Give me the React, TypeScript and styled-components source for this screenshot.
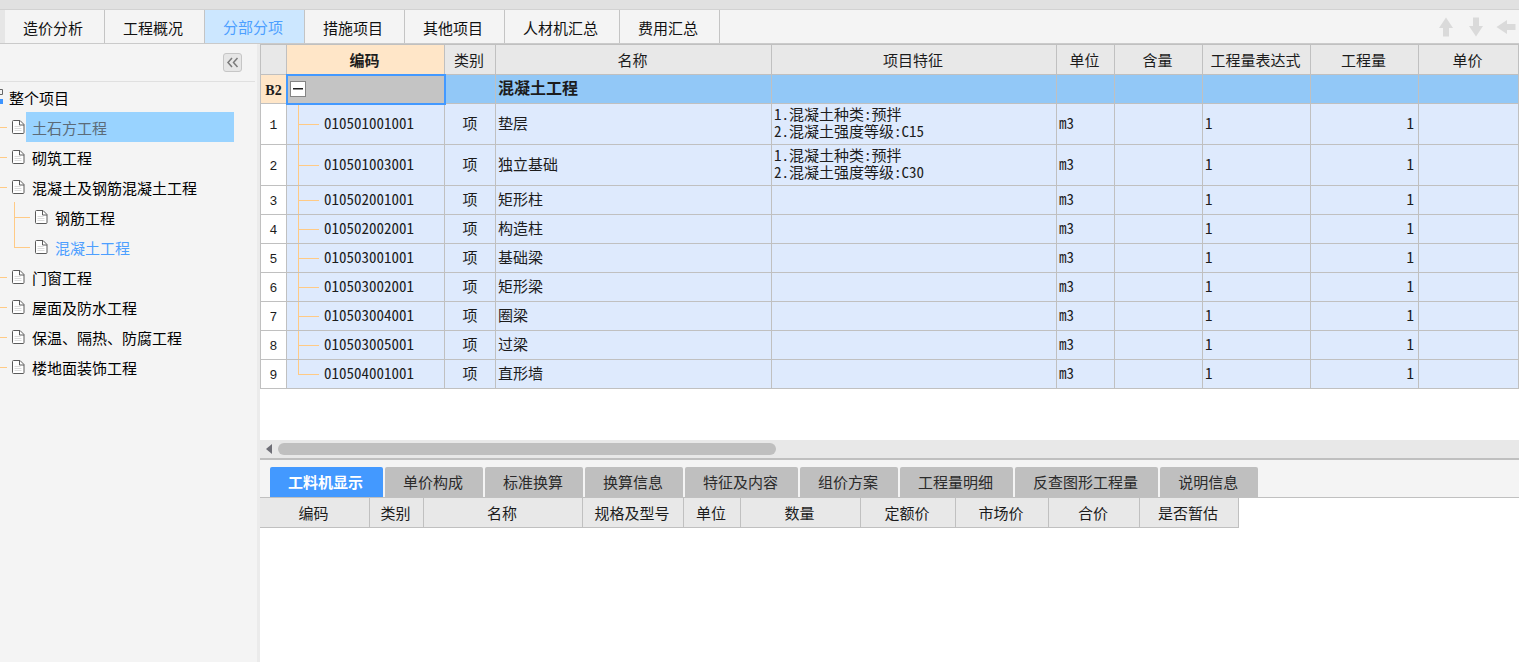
import React from "react";
import styled, { createGlobalStyle, css } from "styled-components";

const GlobalStyle = createGlobalStyle`
  *, *::before, *::after { box-sizing: border-box; }
  body {
    margin: 0;
    font-family: "Noto Sans CJK SC", "Liberation Sans", sans-serif;
    font-size: 15px;
    line-height: 20px;
    color: #1c1c1c;
    background: #fff;
  }
  button { font: inherit; color: inherit; border: 0; padding: 0; background: none; }
`;

const GRID = "#c0c0c0";
const BRANCH = "#ffca85";

const Shell = styled.div`
  min-height: 100vh;
  display: flex;
  flex-direction: column;
`;

const TitleStrip = styled.div`
  height: 10px;
  background: #e1e1e1;
  border-bottom: 1px solid #d2d2d2;
`;

const TopBar = styled.header`
  display: flex;
  justify-content: space-between;
  height: 34px;
  background: #f4f4f4;
  border-bottom: 1px solid #cacaca;
`;

const TopTabs = styled.nav`
  display: flex;
  border-left: 5px solid #e6e6e6;
`;

const TopTab = styled.button<{ $active?: boolean }>`
  padding: 2px 21px 0 18px;
  border-right: 1px solid #c4c4c4;
  color: #111;
  white-space: nowrap;
  ${(p) => p.$active && css`
    padding-top: 0;
    color: #4d9fff;
    background: #cce7ff;
  `}
`;

const MoveTools = styled.div`
  display: flex;
  align-items: center;
  gap: 10px;
  padding: 0 3px 0 0;
`;

const MoveButton = styled.button`
  display: flex;
  width: 20px;
  height: 20px;
`;

const Body = styled.div`
  flex: 1;
  display: flex;
`;

const Sidebar = styled.aside`
  flex: 0 0 260px;
  background: #f4f4f4;
  border-right: 3px solid #ebebeb;
  overflow: hidden;
`;

const SidebarHead = styled.div`
  display: flex;
  justify-content: flex-end;
  align-items: center;
  height: 38px;
  margin-right: 2px;
  padding-right: 13px;
  border-bottom: 1px solid #e0e0e0;
`;

const CollapseButton = styled.button`
  display: grid;
  place-items: center;
  width: 19px;
  height: 19px;
  border: 1px solid #c6c6c6;
  border-radius: 3px;
  background: #e6e6e6;
`;

const TreeList = styled.ul`
  list-style: none;
  margin: 0;
  padding: 0;
`;

const TreeItem = styled.li<{ $nested?: boolean }>`
  display: flex;
  align-items: center;
  height: 30px;
  padding-left: ${(p) => (p.$nested ? 14 : 0)}px;
  padding-right: 23px;
`;

const Branch = styled.span<{ $nested?: boolean; $last?: boolean }>`
  flex: none;
  align-self: stretch;
  width: ${(p) => (p.$nested ? 20 : 11)}px;
  background:
    linear-gradient(${BRANCH}, ${BRANCH}) 0 15px / ${(p) => (p.$nested ? 16 : 7)}px 1px no-repeat
    ${(p) => p.$nested && css`, linear-gradient(${BRANCH}, ${BRANCH}) 0 0 / 1px ${p.$last ? "16px" : "100%"} no-repeat`};
`;

const TreeLabel = styled.button<{ $state?: "selected" | "current" }>`
  flex: 1;
  height: 30px;
  margin-left: 1px;
  padding: 2px 0 0 6px;
  text-align: left;
  white-space: nowrap;
  color: #000;
  ${(p) => p.$state === "selected" && css`
    color: #5c6b78;
    background: #99d3ff;
  `}
  ${(p) => p.$state === "current" && css`color: #4d9fff;`}
`;

const RootLabel = styled(TreeLabel)`
  margin-left: 0;
`;

const Main = styled.main`
  flex: 1;
  min-width: 0;
  display: flex;
  flex-direction: column;
`;

const UpperPane = styled.section`
  padding-bottom: 51px;
  overflow: hidden;
`;

const Table = styled.table`
  border-collapse: separate;
  border-spacing: 0;
  table-layout: fixed;
`;

const BillTable = styled(Table)`
  width: 100%;
  min-width: 1259px;
  border-left: 1px solid ${GRID};
`;

const Th = styled.th<{ $active?: boolean }>`
  height: 30px;
  padding: 0 2px 0 0;
  font-weight: ${(p) => (p.$active ? 700 : 400)};
  white-space: nowrap;
  background: ${(p) => (p.$active ? "#ffe6c8" : "#e8e8e8")};
  border-right: 1px solid ${GRID};
  border-bottom: 1px solid ${GRID};
`;

const BillTh = styled(Th)`
  height: 31px;
  border-top: 1px solid ${GRID};
`;

const Row = styled.tr<{ $group?: boolean; $tall?: boolean }>`
  height: ${(p) => (p.$tall ? 41 : 29)}px;
  background: ${(p) => (p.$group ? "#92c8f7" : "#deeafd")};
  font-weight: ${(p) => (p.$group ? 700 : 400)};
  font-size: ${(p) => (p.$group ? 16 : 15)}px;
`;

const Td = styled.td<{ $align?: "center" | "right" }>`
  padding: 0 2px 4px;
  text-align: ${(p) => p.$align ?? "left"};
  line-height: 17px;
  white-space: pre-line;
  font-feature-settings: "hwid";
  border-right: 1px solid ${GRID};
  border-bottom: 1px solid ${GRID};
`;

const AmountTd = styled(Td)`
  padding-right: 4px;
`;

const RowHead = styled.th<{ $active?: boolean }>`
  padding: 3px 0 0;
  line-height: 17px;
  font-family: ${(p) => (p.$active ? '"Liberation Serif", serif' : '"Liberation Mono", monospace')};
  font-size: ${(p) => (p.$active ? 14 : 13)}px;
  font-weight: ${(p) => (p.$active ? 700 : 400)};
  background: ${(p) => (p.$active ? "#ffe6c8" : "#fff")};
  border-right: 1px solid ${GRID};
  border-bottom: 1px solid ${GRID};
`;

const FocusTd = styled(Td)`
  padding: 0;
  background: #c4c4c4;
  outline: 2px solid #4399ff;
  outline-offset: -1px;
`;

const Toggle = styled.button`
  display: grid;
  place-items: center;
  width: 16px;
  height: 16px;
  margin-left: 3px;
  border: 1px solid #858585;
  background: #fff;
`;

const CodeTd = styled(Td)<{ $last?: boolean }>`
  padding-left: 37px;
  background:
    linear-gradient(${BRANCH}, ${BRANCH}) 11px 50% / 21px 1px no-repeat,
    linear-gradient(${BRANCH}, ${BRANCH}) 11px 0 / 1px ${(p) => (p.$last ? "50%" : "100%")} no-repeat;
`;

const ScrollTrack = styled.div`
  display: flex;
  align-items: center;
  gap: 5px;
  height: 18px;
  padding: 0 10px 0 5px;
  background: #e8e8e8;
`;

const ScrollArrow = styled.button`
  display: flex;
  width: 8px;
  height: 12px;
`;

const ScrollThumb = styled.div`
  width: 40%;
  height: 12px;
  border-radius: 6px;
  background: #bfbfbf;
`;

const LowerPane = styled.section`
  flex: 1;
  border-top: 2px solid #bfbfbf;
  overflow: hidden;
`;

const DetailTabs = styled.nav`
  display: flex;
  align-items: flex-end;
  gap: 2px;
  height: 38px;
  padding-left: 10px;
  background: #f4f4f4;
  border-bottom: 1px solid ${GRID};
`;

const DetailTab = styled.button<{ $active?: boolean }>`
  height: 30px;
  padding: 0 20px 0 18px;
  border-radius: 2px 2px 0 0;
  white-space: nowrap;
  color: ${(p) => (p.$active ? "#fff" : "#2b2b2b")};
  font-weight: ${(p) => (p.$active ? 700 : 400)};
  background: ${(p) => (p.$active ? "#4399ff" : "#bfbfbf")};
`;

const DocIcon = () => (
  <svg width="14" height="16" viewBox="0 0 14 16" fill="none">
    <path d="M2.500 1.500h6.500l4 4v8q0 1-1 1h-9.500q-1 0-1-1v-11q0-1 1-1z" fill="#fff" stroke="#5a5a5a" />
    <path d="M8.500 1.500v4.500h4.500" stroke="#5a5a5a" />
    <path d="M3.500 7.500h6M3.500 9.500h7M3.500 11.500h7" stroke="#dcdcdc" />
  </svg>
);

const ProjectIcon = () => (
  <svg width="3" height="18" viewBox="0 0 3 18" fill="none">
    <path d="M0 1.500h2.500v5H0" stroke="#666" />
    <path d="M0 11h3v5H0z" fill="#3d94ff" />
  </svg>
);

const Arrow = ({ turn }: { turn: number }) => (
  <svg width="20" height="20" viewBox="0 0 20 20">
    <path d="M10 0.500L17 11h-4v8.500H7V11H3z" fill="#dadada" transform={`rotate(${turn} 10 10)`} />
  </svg>
);

const topTabs = ["造价分析", "工程概况", "分部分项", "措施项目", "其他项目", "人材机汇总", "费用汇总"];

type TreeNode = { label: string; nested?: boolean; last?: boolean; state?: "selected" | "current" };
const nodes: TreeNode[] = [
  { label: "土石方工程", state: "selected" },
  { label: "砌筑工程" },
  { label: "混凝土及钢筋混凝土工程" },
  { label: "钢筋工程", nested: true },
  { label: "混凝土工程", nested: true, last: true, state: "current" },
  { label: "门窗工程" },
  { label: "屋面及防水工程" },
  { label: "保温、隔热、防腐工程" },
  { label: "楼地面装饰工程" },
];

type Column = { label: string; width?: number; active?: boolean };
const billColumns: Column[] = [
  { label: "", width: 26 },
  { label: "编码", width: 158, active: true },
  { label: "类别", width: 51 },
  { label: "名称", width: 276 },
  { label: "项目特征", width: 285 },
  { label: "单位", width: 58 },
  { label: "含量", width: 88 },
  { label: "工程量表达式", width: 108 },
  { label: "工程量", width: 108 },
  { label: "单价" },
];

const items = [
  { code: "010501001001", name: "垫层", feature: "1.混凝土种类:预拌\n2.混凝土强度等级:C15" },
  { code: "010501003001", name: "独立基础", feature: "1.混凝土种类:预拌\n2.混凝土强度等级:C30" },
  { code: "010502001001", name: "矩形柱" },
  { code: "010502002001", name: "构造柱" },
  { code: "010503001001", name: "基础梁" },
  { code: "010503002001", name: "矩形梁" },
  { code: "010503004001", name: "圈梁" },
  { code: "010503005001", name: "过梁" },
  { code: "010504001001", name: "直形墙" },
];

const detailTabs = ["工料机显示", "单价构成", "标准换算", "换算信息", "特征及内容", "组价方案", "工程量明细", "反查图形工程量", "说明信息"];

const detailColumns: Column[] = [
  { label: "编码", width: 110 },
  { label: "类别", width: 54 },
  { label: "名称", width: 159 },
  { label: "规格及型号", width: 101 },
  { label: "单位", width: 57 },
  { label: "数量", width: 120 },
  { label: "定额价", width: 95 },
  { label: "市场价", width: 93 },
  { label: "合价", width: 91 },
  { label: "是否暂估", width: 99 },
];

const Columns = ({ list }: { list: Column[] }) => (
  <colgroup>
    {list.map((c, i) => <col key={i} width={c.width} />)}
  </colgroup>
);

export default function App() {
  return (
    <Shell>
      <GlobalStyle />
      <TitleStrip />
      <TopBar>
        <TopTabs>
          {topTabs.map((t) => <TopTab key={t} $active={t === "分部分项"}>{t}</TopTab>)}
        </TopTabs>
        <MoveTools>
          <MoveButton aria-label="上移"><Arrow turn={0} /></MoveButton>
          <MoveButton aria-label="下移"><Arrow turn={180} /></MoveButton>
          <MoveButton aria-label="左移"><Arrow turn={-90} /></MoveButton>
        </MoveTools>
      </TopBar>
      <Body>
        <Sidebar>
          <SidebarHead>
            <CollapseButton aria-label="收起">
              <svg width="13" height="11" viewBox="0 0 13 11" fill="none" stroke="#7a7a7a">
                <path d="M6 1L2 5.500L6 10M11.500 1L7.500 5.500L11.500 10" strokeWidth="1.500" />
              </svg>
            </CollapseButton>
          </SidebarHead>
          <TreeList>
            <TreeItem>
              <ProjectIcon />
              <RootLabel>整个项目</RootLabel>
            </TreeItem>
            {nodes.map((n) => (
              <TreeItem key={n.label} $nested={n.nested}>
                <Branch $nested={n.nested} $last={n.last} />
                <DocIcon />
                <TreeLabel $state={n.state}>{n.label}</TreeLabel>
              </TreeItem>
            ))}
          </TreeList>
        </Sidebar>
        <Main>
          <UpperPane>
            <BillTable>
              <Columns list={billColumns} />
              <thead>
                <tr>
                  {billColumns.map((c) => <BillTh key={c.label} $active={c.active}>{c.label}</BillTh>)}
                </tr>
              </thead>
              <tbody>
                <Row $group>
                  <RowHead $active>B2</RowHead>
                  <FocusTd>
                    <Toggle aria-label="折叠">
                      <svg width="10" height="2" viewBox="0 0 10 2"><path d="M0 0h10v1.500H0z" fill="#222" /></svg>
                    </Toggle>
                  </FocusTd>
                  <Td />
                  <Td>混凝土工程</Td>
                  <Td /><Td /><Td /><Td /><Td /><Td />
                </Row>
                {items.map((it, i) => (
                  <Row key={it.code} $tall={!!it.feature}>
                    <RowHead>{i + 1}</RowHead>
                    <CodeTd $last={i === items.length - 1}>{it.code}</CodeTd>
                    <Td $align="center">项</Td>
                    <Td>{it.name}</Td>
                    <Td>{it.feature}</Td>
                    <Td>m3</Td>
                    <Td />
                    <Td>1</Td>
                    <AmountTd $align="right">1</AmountTd>
                    <Td />
                  </Row>
                ))}
              </tbody>
            </BillTable>
          </UpperPane>
          <ScrollTrack>
            <ScrollArrow aria-label="向左滚动">
              <svg width="8" height="12" viewBox="0 0 8 12"><path d="M7 1v10L1 6z" fill="#6e6e76" /></svg>
            </ScrollArrow>
            <ScrollThumb />
          </ScrollTrack>
          <LowerPane>
            <DetailTabs>
              {detailTabs.map((t, i) => <DetailTab key={t} $active={i === 0}>{t}</DetailTab>)}
            </DetailTabs>
            <Table>
              <Columns list={detailColumns} />
              <thead>
                <tr>{detailColumns.map((c) => <Th key={c.label}>{c.label}</Th>)}</tr>
              </thead>
            </Table>
          </LowerPane>
        </Main>
      </Body>
    </Shell>
  );
}
